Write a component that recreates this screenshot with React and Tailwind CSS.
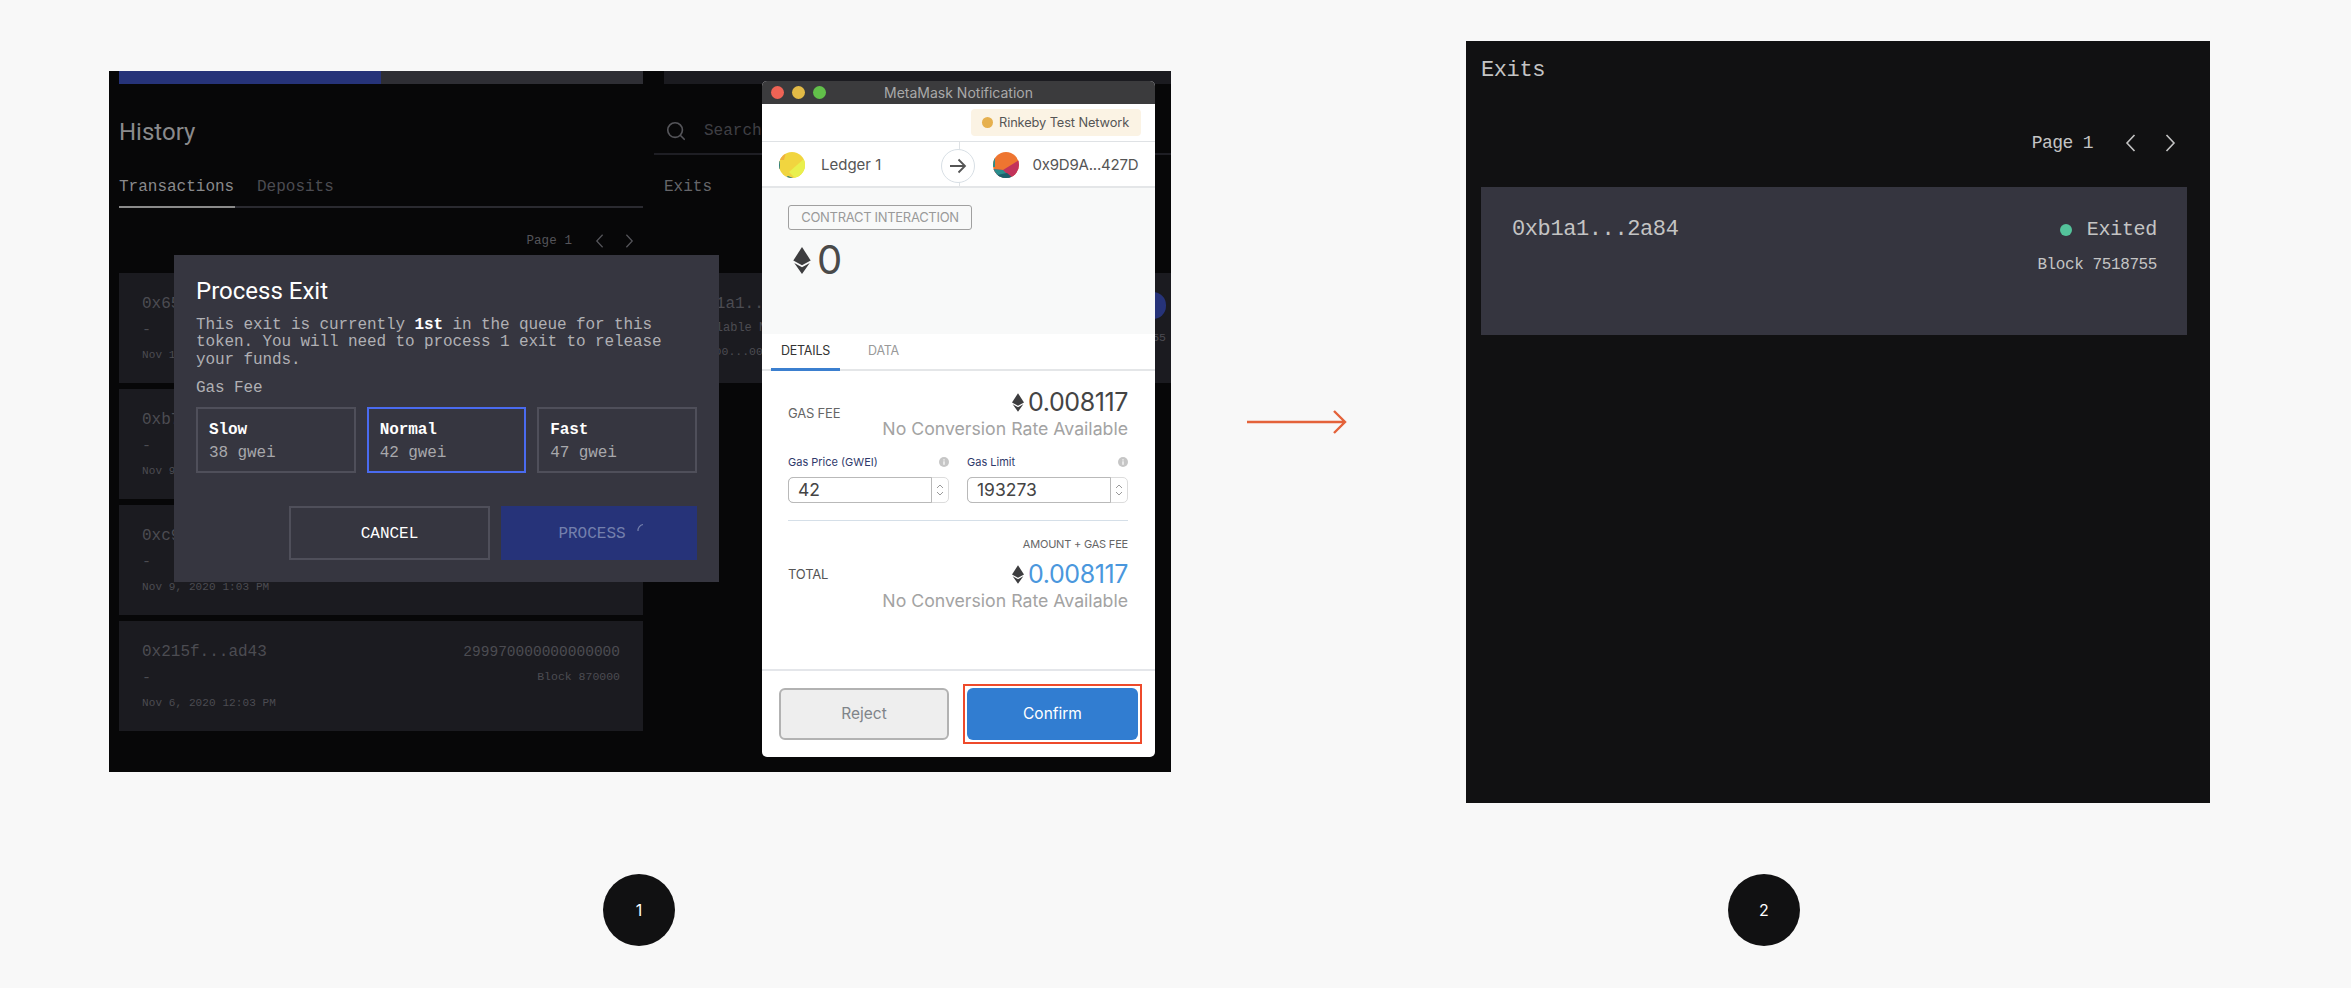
import React from 'react';
import { Search } from 'lucide-react';

const MONO = 'font-["Liberation_Mono",monospace]';
const SANS = 'font-["Roboto",sans-serif]';
const META = 'font-["Inter",sans-serif]';

const Chevron = ({ left, className }) => (
  <svg viewBox="0 0 11 18" className={className} fill="none" stroke="currentColor" strokeWidth="1.6">
    <path d={left ? 'M9.5 1 2 9l7.5 8' : 'M1.5 1 9 9l-7.5 8'} />
  </svg>
);

const EthIcon = ({ className }) => (
  <svg viewBox="0 0 18 28" className={className} fill="#3d3d3f">
    <path d="M9 0 18 14 9 19 0 14Z" />
    <path d="M1 16.5 9 21l8-4.500L9 28Z" />
  </svg>
);

const InfoDot = () => (
  <svg viewBox="0 0 10 10" className="h-[10px] w-[10px]">
    <circle cx="5" cy="5" r="5" fill="#c6c6c6" />
    <rect x="4.400" y="4.300" width="1.200" height="3.500" fill="#fff" />
    <rect x="4.400" y="2.300" width="1.200" height="1.200" fill="#fff" />
  </svg>
);

// background list row, mostly hidden behind the modal
const HistoryCard = ({ address, date, amount, block }) => (
  <div className={`flex h-[110px] justify-between bg-[#1b1b20] px-[23px] pt-[20px] ${MONO} text-[#4c4c52]`}>
    <div>
      <div className="h-[20px] text-[16px] leading-[22px]">{address}</div>
      <div className="mt-[8px] h-[20px] text-[15px] leading-[20px]">-</div>
      <div className="mt-[6px] h-[16px] text-[11px] leading-[16px] tracking-[0.1px]">{date}</div>
    </div>
    {amount && (
      <div className="text-right">
        <div className="h-[20px] text-[14.500px] leading-[22px]">{amount}</div>
        <div className="mt-[8px] h-[16px] text-[11.500px] leading-[16px]">{block}</div>
      </div>
    )}
  </div>
);

const GasOption = ({ name, price, active }) => (
  <div className={`h-[66px] border-2 pl-[11px] pt-[11px] ${MONO} ${active ? 'border-[#4a6bef]' : 'border-[#4f4f5a]'}`}>
    <div className="h-[20px] text-[16px] font-bold leading-[20px] tracking-[-0.1px] text-white">{name}</div>
    <div className="mt-[3px] h-[20px] text-[16px] leading-[20px] tracking-[-0.1px] text-[#a8a8ac]">{price}</div>
  </div>
);

const ProcessExitModal = () => (
  <div className="absolute left-[65px] top-[184px] h-[327px] w-[545px] bg-[#363640] px-[22px] pt-[21px]">
    <h2 className={`h-[30px] text-[24px] leading-[30px] text-white ${SANS}`}>Process Exit</h2>
    <p className={`mt-[10.500px] text-[16px] leading-[17.500px] tracking-[-0.1px] text-[#b0b0b4] ${MONO}`}>
      This exit is currently <b className="text-white">1st</b> in the queue for this<br />
      token. You will need to process 1 exit to release<br />
      your funds.
    </p>
    <div className={`mt-[8.500px] h-[20px] text-[16px] leading-[20px] tracking-[-0.1px] text-[#b0b0b4] ${MONO}`}>Gas Fee</div>
    <div className="mt-[9px] grid grid-cols-3 gap-[11px]">
      <GasOption name="Slow" price="38 gwei" />
      <GasOption name="Normal" price="42 gwei" active />
      <GasOption name="Fast" price="47 gwei" />
    </div>
    <div className={`mt-[33px] flex justify-end gap-[11px] text-[16px] ${MONO}`}>
      <button className="h-[54px] w-[201px] border-2 border-[#4f4f5a] pt-[3px] text-white">CANCEL</button>
      <button className="flex h-[54px] w-[196px] items-center justify-center gap-[10px] bg-[#263379] pl-[12px] pt-[3px] text-[#7480ad]">
        PROCESS
        <svg viewBox="0 0 16 16" className="mb-[8px] h-[16px] w-[16px]" fill="none" stroke="#7480ad" strokeWidth="1.200">
          <path d="M2 9A6 6 0 0 1 7 2.500" />
        </svg>
      </button>
    </div>
  </div>
);

const GasInput = ({ label, value }) => (
  <div>
    <div className="flex h-[14px] items-center justify-between text-[11px] leading-[14px] text-[#2f3a6b]">
      {label}
      <InfoDot />
    </div>
    <div className="mt-[8px] flex h-[26px] rounded-[5px] border border-[#dcdcdc]">
      <div className="-m-px flex-1 rounded-l-[5px] border-[1.500px] border-r border-[#b9b9b9] pl-[9px] text-[17.500px] leading-[24px] text-[#444]">{value}</div>
      <div className="flex w-[17px] flex-col items-center justify-center gap-[2px] text-[#9a9a9a]">
        <svg viewBox="0 0 8 5" className="h-[5px] w-[8px]" fill="none" stroke="currentColor"><path d="M1 4l3-3 3 3" /></svg>
        <svg viewBox="0 0 8 5" className="h-[5px] w-[8px]" fill="none" stroke="currentColor"><path d="M1 1l3 3 3-3" /></svg>
      </div>
    </div>
  </div>
);

const FeeValue = ({ value, blue }) => (
  <div className="text-right">
    <div className="flex h-[28px] items-center justify-end gap-[4px]">
      <EthIcon className="h-[19px] w-[12px]" />
      <span className={`text-[25px] leading-[28px] tracking-[-0.4px] ${blue ? 'text-[#4a97dd]' : 'text-[#444]'}`}>{value}</span>
    </div>
    <div className="mt-[1px] h-[24px] text-[17.700px] leading-[24px] text-[#a3a3a3]">No Conversion Rate Available</div>
  </div>
);

const MetaMaskWindow = () => (
  <div className={`absolute left-[653px] top-[10px] flex h-[676px] w-[393px] flex-col overflow-hidden rounded-[5px] bg-white ${META}`}>
    <div className="relative flex h-[23px] items-center justify-center bg-[#3b3b3d] text-[14px] text-[#a9a9a9]">
      <div className="absolute left-[9px] flex gap-[8px]">
        <span className="h-[13px] w-[13px] rounded-full bg-[#ee6355]" />
        <span className="h-[13px] w-[13px] rounded-full bg-[#e2ba46]" />
        <span className="h-[13px] w-[13px] rounded-full bg-[#62c04a]" />
      </div>
      MetaMask Notification
    </div>

    <div className="flex h-[38px] justify-end border-b border-[#dfe2e5] pr-[14px] pt-[5px]">
      <div className="flex h-[27px] w-[170px] items-center gap-[6px] rounded-[4px] bg-[#fbf3e4] pl-[11px] text-[12.800px] tracking-[-0.1px] text-[#555]">
        <span className="h-[11px] w-[11px] rounded-full bg-[#e6b04e]" />
        Rinkeby Test Network
      </div>
    </div>

    <div className="relative flex h-[46px] items-center border-b-2 border-[#e4e6e8] pt-[2px] text-[15px] text-[#555]">
      <div className="flex w-1/2 items-center pl-[17px]">
        <svg viewBox="0 0 26 26" className="h-[26px] w-[26px] rounded-full">
          <rect width="26" height="26" fill="#f1d53f" />
          <path d="M26 6 10 20l6 6h10Z" fill="#e9f04d" />
          <path d="M0 0h7L5 8H0Z" fill="#efb13f" />
          <path d="M6 26l3-2 5 2Z" fill="#2b7d80" />
          <path d="M0 9h1v8H0Z" fill="#2b7d80" />
        </svg>
        <span className="ml-[16px]">Ledger 1</span>
      </div>
      <div className="flex w-1/2 items-center pl-[34px]">
        <svg viewBox="0 0 26 26" className="h-[26px] w-[26px] rounded-full">
          <rect width="26" height="26" fill="#ee7530" />
          <path d="M0 17 10 18l16-10v18H0Z" fill="#c2335b" />
          <path d="M0 17 10 18l8 8H0Z" fill="#2a8d8c" />
          <path d="M4 23l10-2 6 5H6Z" fill="#1c5f6c" />
          <path d="M0 5h2v10H0Z" fill="#2a8d8c" />
        </svg>
        <span className="ml-[14px] tracking-[-0.2px]">0x9D9A...427D</span>
      </div>
      <div className="absolute left-1/2 top-0 h-full w-px bg-[#dfe2e5]" />
      <div className="absolute left-[179px] top-[7px] flex h-[34px] w-[34px] items-center justify-center rounded-full border border-[#d8dfe5] bg-white">
        <svg viewBox="0 0 18 16" className="h-[16px] w-[18px]" fill="none" stroke="#555" strokeWidth="1.800">
          <path d="M1 8h15M9.500 1.500 16 8l-6.500 6.500" />
        </svg>
      </div>
    </div>

    <div className="h-[146px] bg-[#f8f9f9] pl-[26px] pt-[17px]">
      <div className="flex h-[25px] w-[184px] items-center justify-center rounded-[3px] border border-[#a0a0a0] text-[13px] tracking-[-0.3px] text-[#9a9a9a]">
        CONTRACT INTERACTION
      </div>
      <div className="ml-[5px] mt-[10px] flex h-[40px] items-center gap-[6px]">
        <EthIcon className="h-[27px] w-[18px]" />
        <span className="text-[40px] leading-[40px] text-[#4a4a4a]">0</span>
      </div>
    </div>

    <div className="flex h-[37px] border-b-2 border-[#e4e6e8] pl-[9px] text-[12.500px]">
      <div className="-mb-[2px] flex w-[69px] items-center justify-center border-b-[3px] border-[#3b7fcf] tracking-[-0.2px] text-[#333]">DETAILS</div>
      <div className="ml-[28px] flex items-center tracking-[-0.2px] text-[#999]">DATA</div>
    </div>

    <div className="pl-[26px] pr-[27px]">
      <div className="mt-[17px] flex items-center justify-between">
        <span className="-mt-[2px] text-[13px] tracking-[-0.2px] text-[#666]">GAS FEE</span>
        <FeeValue value="0.008117" />
      </div>
      <div className="mt-[14px] grid grid-cols-2 gap-[18px]">
        <GasInput label="Gas Price (GWEI)" value="42" />
        <GasInput label="Gas Limit" value="193273" />
      </div>
      <div className="mt-[17px] h-px bg-[#d5dfe8]" />
      <div className="mt-[16px] h-[14px] text-right text-[11px] leading-[14px] tracking-[-0.2px] text-[#666]">AMOUNT + GAS FEE</div>
      <div className="mt-[9px] flex items-start justify-between">
        <span className="mt-[5px] text-[13px] tracking-[-0.2px] text-[#555]">TOTAL</span>
        <FeeValue value="0.008117" blue />
      </div>
    </div>

    <div className="mt-auto flex h-[88px] items-center justify-between border-t-2 border-[#e4e6ea] pl-[17px] pr-[13px] text-[15.500px]">
      <button className="h-[52px] w-[170px] rounded-[6px] border-2 border-[#b2b2b2] bg-[#eeeeee] text-[#7f8489]">Reject</button>
      <div className="border-2 border-[#ee4a2b] p-[2px]">
        <button className="block h-[52px] w-[171px] rounded-[6px] bg-[#317dd1] text-white">Confirm</button>
      </div>
    </div>
  </div>
);

const ScreenOne = () => (
  <div className="relative ml-[109px] mt-[71px] flex h-[701px] w-[1062px] shrink-0 overflow-hidden bg-[#070708]">
    <div className="ml-[10px] w-[524px]">
      <div className="flex h-[13px] bg-[#2e2e34]">
        <div className="w-[262px] bg-[#263379]" />
      </div>
      <div className={`mt-[33px] h-[30px] text-[24px] leading-[30px] text-[#8a8a8c] ${SANS}`}>History</div>
      <div className={`mt-[30px] flex gap-[22px] border-b-2 border-[#2a2a30] text-[16px] leading-[21px] ${MONO}`}>
        <div className="-mb-[2px] w-[116px] border-b-2 border-[#8a8a8a] pb-[8px] text-[#8a8a8c]">Transactions</div>
        <div className="text-[#4c4c52]">Deposits</div>
      </div>
      <div className={`mt-[23px] flex h-[20px] items-center justify-end pr-[9px] text-[12.500px] tracking-[0.1px] text-[#55555a] ${MONO}`}>
        Page 1
        <Chevron left className="ml-[23px] h-[14px] w-[9px]" />
        <Chevron className="ml-[21px] h-[14px] w-[9px]" />
      </div>
      <div className="mt-[22px] flex flex-col gap-[6px]">
        <HistoryCard address="0x65" date="Nov 1" />
        <HistoryCard address="0xb7" date="Nov 9" />
        <HistoryCard address="0xc9" date="Nov 9, 2020 1:03 PM" />
        <HistoryCard address="0x215f...ad43" date="Nov 6, 2020 12:03 PM" amount="299970000000000000" block="Block 870000" />
      </div>
    </div>

    <div className="ml-[11px] flex-1">
      <div className="ml-[10px] h-[13px] bg-[#1b1b20]" />
      <div className={`mt-[21px] flex h-[50px] items-center border-b-2 border-[#1e1e24] pl-[11px] pt-[4px] text-[16px] text-[#3f3f44] ${MONO}`}>
        <Search size={22} strokeWidth={1.800} className="text-[#55555a]" />
        <span className="ml-[17px]">Search</span>
      </div>
      <div className={`ml-[10px] mt-[22px] h-[20px] text-[16px] leading-[21px] text-[#66666a] ${MONO}`}>Exits</div>
      <div className={`ml-[10px] mt-[76px] flex h-[110px] justify-between bg-[#1b1b20] pl-[23px] pr-[5px] pt-[20px] text-[#4c4c52] ${MONO}`}>
        <div>
          <div className="h-[20px] text-[16px] leading-[22px]">0xb1a1...2a84</div>
          <div className="mt-[7px] h-[16px] text-[12px] leading-[16px]">Available Now</div>
          <div className="mt-[8px] h-[16px] text-[11.500px] leading-[16px]">0x0000...00</div>
        </div>
        <div className="flex flex-col items-end">
          <div className="-mt-[1px] h-[27px] w-[26px] rounded-full bg-[#263379]" />
          <div className="mt-[11px] text-[11.500px] leading-[16px]">55</div>
        </div>
      </div>
    </div>

    <ProcessExitModal />
    <MetaMaskWindow />
  </div>
);

const ScreenTwo = () => (
  <div className={`ml-[119px] mt-[41px] h-[762px] w-[744px] shrink-0 bg-[#111112] pl-[15px] pr-[23px] pt-[15.500px] ${MONO}`}>
    <div className="h-[28px] text-[22px] leading-[28px] tracking-[-0.4px] text-[#c4c4c4]">Exits</div>
    <div className="mt-[45.500px] flex h-[26px] items-center justify-end pr-[11px] text-[18px] tracking-[-0.6px] text-[#c4c4c4]">
      Page 1
      <Chevron left className="ml-[32px] h-[18px] w-[11px]" />
      <Chevron className="ml-[29px] h-[18px] w-[11px]" />
    </div>
    <div className="mt-[31px] flex h-[148px] justify-between bg-[#35353f] pl-[31px] pr-[30px] pt-[28.500px] text-[#c4c4c4]">
      <div className="h-[28px] text-[22px] leading-[28px] tracking-[-0.4px]">0xb1a1...2a84</div>
      <div className="flex flex-col items-end">
        <div className="flex h-[28px] items-center text-[20px] tracking-[-0.3px]">
          <span className="mr-[15px] h-[12px] w-[12px] rounded-full bg-[#54c39b]" />
          Exited
        </div>
        <div className="mt-[13px] text-[16px] leading-[16px] tracking-[-0.4px]">Block 7518755</div>
      </div>
    </div>
  </div>
);

const StepBadge = ({ children }) => (
  <div className={`flex h-[72px] w-[72px] items-center justify-center rounded-full bg-[#111112] text-[16px] text-white ${META}`}>
    {children}
  </div>
);

export default function App() {
  return (
    <div className="h-[988px] w-[2351px] overflow-hidden bg-[#f8f8f8]">
      <div className="flex h-[874px] items-start">
        <ScreenOne />
        <svg viewBox="0 0 100 24" className="ml-[76px] mt-[410px] h-[24px] w-[100px] shrink-0" fill="none" stroke="#e4623a" strokeWidth="2.400">
          <path d="M0 12h98M87 1l11 11-11 11" />
        </svg>
        <ScreenTwo />
      </div>
      <div className="flex gap-[1053px] pl-[603px]">
        <StepBadge>1</StepBadge>
        <StepBadge>2</StepBadge>
      </div>
    </div>
  );
}
